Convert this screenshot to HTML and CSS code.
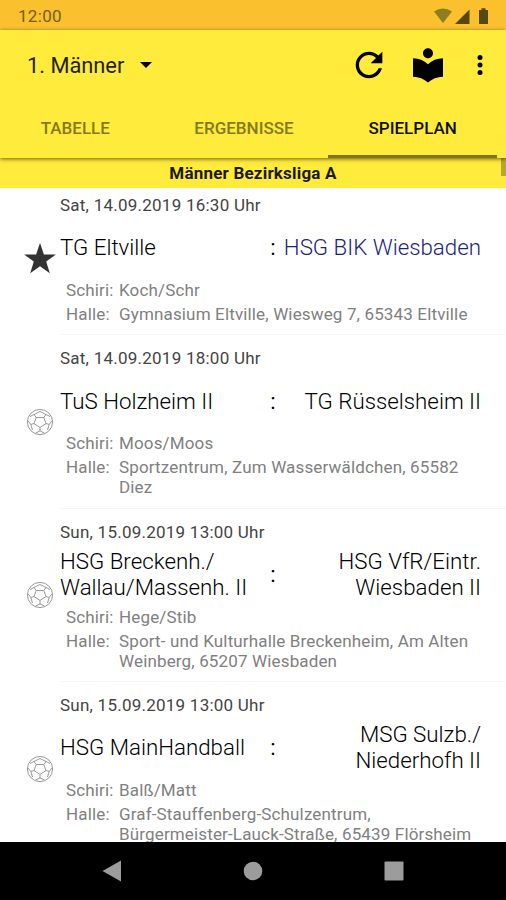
FILE: index.html
```
<!DOCTYPE html>
<html lang="de">
<head>
    <meta charset="UTF-8">
    <meta name="viewport" content="width=device-width, initial-scale=1.0">
    <title>Spielplan</title>
    <link rel="stylesheet" href="styles.css">
</head>
<body>
    <!-- Symbole -->
    <svg class="symbols" width="0" height="0">
        <symbol id="ball" viewBox="0 0 28 28">
            <g fill="none" stroke="#999" stroke-width="1">
                <circle cx="14" cy="14" r="12.6"/>
                <path d="M10.200 9.500h7.600l2.200 6L14 19.500l-6-4z"/>
                <path d="M10.200 9.500L8 6.500M17.800 9.500l2.200-3M20 15.500l3.200 1M14 19.500V23M8 15.500l-3.200 1"/>
                <path d="M8 6.500L14 3.500l6 3M8 6.500L4 8.500M20 6.500l4 2M23.200 16.500l2.600-3.500M23.200 16.500l-1.700 5.500M14 23l4.500 2M14 23l-4.500 2M4.800 16.500L2.200 13M4.800 16.500L6.500 22"/>
            </g>
        </symbol>
    </svg>

    <!-- Statusleiste -->
    <div class="status">
        <span class="clock">12:00</span>
        <svg class="status-icons" width="56" height="18" viewBox="0 0 56 18">
            <path fill="#8c7d20" d="M0 4.500Q9 -1.500 18 4.500L9 16z"/>
            <path fill="#54480f" d="M21 17L35.500 2.500V17z"/>
            <path fill="#54480f" d="M45 3h2.500V1.200h4V3H54v14h-9z"/>
        </svg>
    </div>

    <!-- Kopfzeile -->
    <header class="header">
        <div class="toolbar">
            <span class="title">1. Männer</span>
            <svg class="arrow" width="12" height="6" viewBox="0 0 12 6"><path d="M0 0h12L6 6z"/></svg>
            <div class="actions">
                <svg width="40" height="40" viewBox="0 0 24 24"><path d="M17.650 6.350C16.200 4.900 14.210 4 12 4c-4.420 0-7.990 3.580-7.990 8s3.570 8 7.990 8c3.730 0 6.840-2.550 7.730-6h-2.080c-.82 2.330-3.040 4-5.650 4-3.310 0-6-2.690-6-6s2.690-6 6-6c1.660 0 3.140.69 4.220 1.780L13 11h7V4l-2.350 2.350z"/></svg>
                <svg width="40" height="40" viewBox="0 0 24 24"><path d="M12 11.550C9.640 9.350 6.480 8 3 8v11c3.480 0 6.640 1.350 9 3.550 2.360-2.190 5.520-3.550 9-3.550V8c-3.480 0-6.640 1.350-9 3.550zM12 8c1.660 0 3-1.340 3-3s-1.340-3-3-3-3 1.340-3 3 1.340 3 3 3z"/></svg>
                <svg width="30" height="30" viewBox="0 0 24 24"><circle cx="12" cy="6" r="2"/><circle cx="12" cy="12" r="2"/><circle cx="12" cy="18" r="2"/></svg>
            </div>
        </div>
        <nav class="tabs">
            <span class="tab">TABELLE</span>
            <span class="tab">ERGEBNISSE</span>
            <span class="tab active">SPIELPLAN</span>
        </nav>
    </header>

    <div class="league">Männer Bezirksliga A<span class="scrollbar"></span></div>

    <!-- Spiele -->
    <main class="games">
        <div class="game">
            <svg class="icon" width="32" height="31" viewBox="0 0 32 31"><path fill="#333" d="M16 0l3.900 11.500h12L22.200 18.600l3.600 11.600L16 23.200 6.200 30.200l3.600-11.600L.1 11.500h12z"/></svg>
            <div class="info">
                <div class="date">Sat, 14.09.2019 16:30 Uhr</div>
                <div class="teams">
                    <span class="home">TG Eltville</span>
                    <span class="colon">:</span>
                    <span class="guest own">HSG BIK Wiesbaden</span>
                </div>
                <div class="details">
                    <span>Schiri:</span><span>Koch/Schr</span>
                    <span>Halle:</span><span>Gymnasium Eltville, Wiesweg 7, 65343 Eltville</span>
                </div>
            </div>
        </div>
        <div class="game">
            <svg class="icon" width="28" height="28"><use href="#ball"/></svg>
            <div class="info">
                <div class="date">Sat, 14.09.2019 18:00 Uhr</div>
                <div class="teams">
                    <span class="home">TuS Holzheim II</span>
                    <span class="colon">:</span>
                    <span class="guest">TG Rüsselsheim II</span>
                </div>
                <div class="details">
                    <span>Schiri:</span><span>Moos/Moos</span>
                    <span>Halle:</span><span>Sportzentrum, Zum Wasserwäldchen, 65582<br>Diez</span>
                </div>
            </div>
        </div>
        <div class="game">
            <svg class="icon" width="28" height="28"><use href="#ball"/></svg>
            <div class="info">
                <div class="date">Sun, 15.09.2019 13:00 Uhr</div>
                <div class="teams">
                    <span class="home">HSG Breckenh./<br>Wallau/Massenh. II</span>
                    <span class="colon">:</span>
                    <span class="guest">HSG VfR/Eintr.<br>Wiesbaden II</span>
                </div>
                <div class="details">
                    <span>Schiri:</span><span>Hege/Stib</span>
                    <span>Halle:</span><span>Sport- und Kulturhalle Breckenheim, Am Alten<br>Weinberg, 65207 Wiesbaden</span>
                </div>
            </div>
        </div>
        <div class="game">
            <svg class="icon" width="28" height="28"><use href="#ball"/></svg>
            <div class="info">
                <div class="date">Sun, 15.09.2019 13:00 Uhr</div>
                <div class="teams">
                    <span class="home">HSG MainHandball</span>
                    <span class="colon">:</span>
                    <span class="guest">MSG Sulzb./<br>Niederhofh II</span>
                </div>
                <div class="details">
                    <span>Schiri:</span><span>Balß/Matt</span>
                    <span>Halle:</span><span>Graf-Stauffenberg-Schulzentrum,<br>Bürgermeister-Lauck-Straße, 65439 Flörsheim</span>
                </div>
            </div>
        </div>
    </main>

    <!-- Navigationsleiste -->
    <footer class="navbar">
        <svg width="20" height="22" viewBox="0 0 20 22"><path d="M0.500 11L19 .5v21z"/></svg>
        <svg width="20" height="20" viewBox="0 0 20 20"><circle cx="10" cy="10" r="9.300"/></svg>
        <svg width="20" height="20" viewBox="0 0 20 20"><rect x=".5" y=".5" width="19" height="19" rx="1"/></svg>
    </footer>
</body>
</html>
```
FILE: styles.css
```
body {
    font-family: Roboto, "Liberation Sans", sans-serif;
    margin: 0;
    height: 900px;
    display: flex;
    flex-direction: column;
    background-color: #ffffff;
    overflow: hidden;
}

svg {
    display: block;
    flex: none;
}

.symbols {
    height: 0;
}

.status {
    height: 30px;
    display: flex;
    align-items: center;
    justify-content: space-between;
    padding: 2px 16px 0 18px;
    box-sizing: border-box;
    background-color: #fbc02d;
}

.clock {
    font-size: 17px;
    letter-spacing: 0.3px;
    color: #73601a;
}

.header {
    position: relative;
    z-index: 1;
    height: 128px;
    background-color: #ffeb3b;
    box-shadow: 0 1px 4px rgba(0, 0, 0, 0.6);
}

.toolbar {
    display: flex;
    align-items: center;
    height: 69px;
    padding: 0 11px 0 27px;
}

.title {
    width: 113px;
    padding-top: 2px;
    font-size: 21.8px;
    color: #222;
    white-space: nowrap;
}

.actions {
    display: flex;
    align-items: center;
    margin-left: auto;
}

.actions svg:nth-child(2) {
    margin: 0 17px 0 19px;
}

.tabs {
    display: flex;
    height: 59px;
    width: 506px;
    margin-left: -9px;
}

.tab {
    flex: 1;
    box-sizing: border-box;
    border-bottom: 3px solid transparent;
    line-height: 58px;
    text-align: center;
    font-size: 17px;
    font-weight: 500;
    color: #857a1e;
}

.tab.active {
    color: #111;
    border-bottom-color: #7d7424;
}

.league {
    position: relative;
    height: 30px;
    line-height: 30px;
    text-align: center;
    font-size: 17px;
    font-weight: 700;
    letter-spacing: 0.2px;
    color: #1a1a1a;
    background-color: #ffeb3b;
}

.scrollbar {
    position: absolute;
    right: 0;
    top: 0;
    width: 5px;
    height: 18px;
    background-color: #b5a72f;
}

.games {
    flex: 1;
    min-height: 0;
    overflow: hidden;
}

.game {
    display: flex;
    align-items: center;
}

/* Liste ist leicht gescrollt */
.game:first-child {
    margin-top: -6px;
}

.icon {
    width: 32px;
    margin: 0 4px 0 24px;
}

.info {
    flex: 1;
    padding: 12.8px 0 10.6px;
    border-bottom: 1px solid #f5f5f5;
}

.date {
    font-size: 17px;
    line-height: 20px;
    letter-spacing: 0.24px;
    color: #444;
}

.teams {
    display: grid;
    grid-template-columns: 203px 20px 198px;
    align-items: center;
    height: 53px;
    margin-top: 6px;
    font-size: 22.3px;
    font-weight: 300;
    line-height: 26px;
    color: #000;
    white-space: nowrap;
}

.colon {
    text-align: center;
    font-weight: 400;
}

.guest {
    text-align: right;
}

.own {
    color: #1a237e;
}

.details {
    display: grid;
    grid-template-columns: 53px 1fr;
    row-gap: 4px;
    margin-top: 6px;
    padding-left: 6px;
    font-size: 17px;
    line-height: 20px;
    letter-spacing: 0.15px;
    color: #808080;
    white-space: nowrap;
}

.navbar {
    display: flex;
    align-items: center;
    justify-content: space-between;
    height: 58px;
    padding: 0 102px;
    background-color: #000;
    fill: #9c9c9c;
}
```
